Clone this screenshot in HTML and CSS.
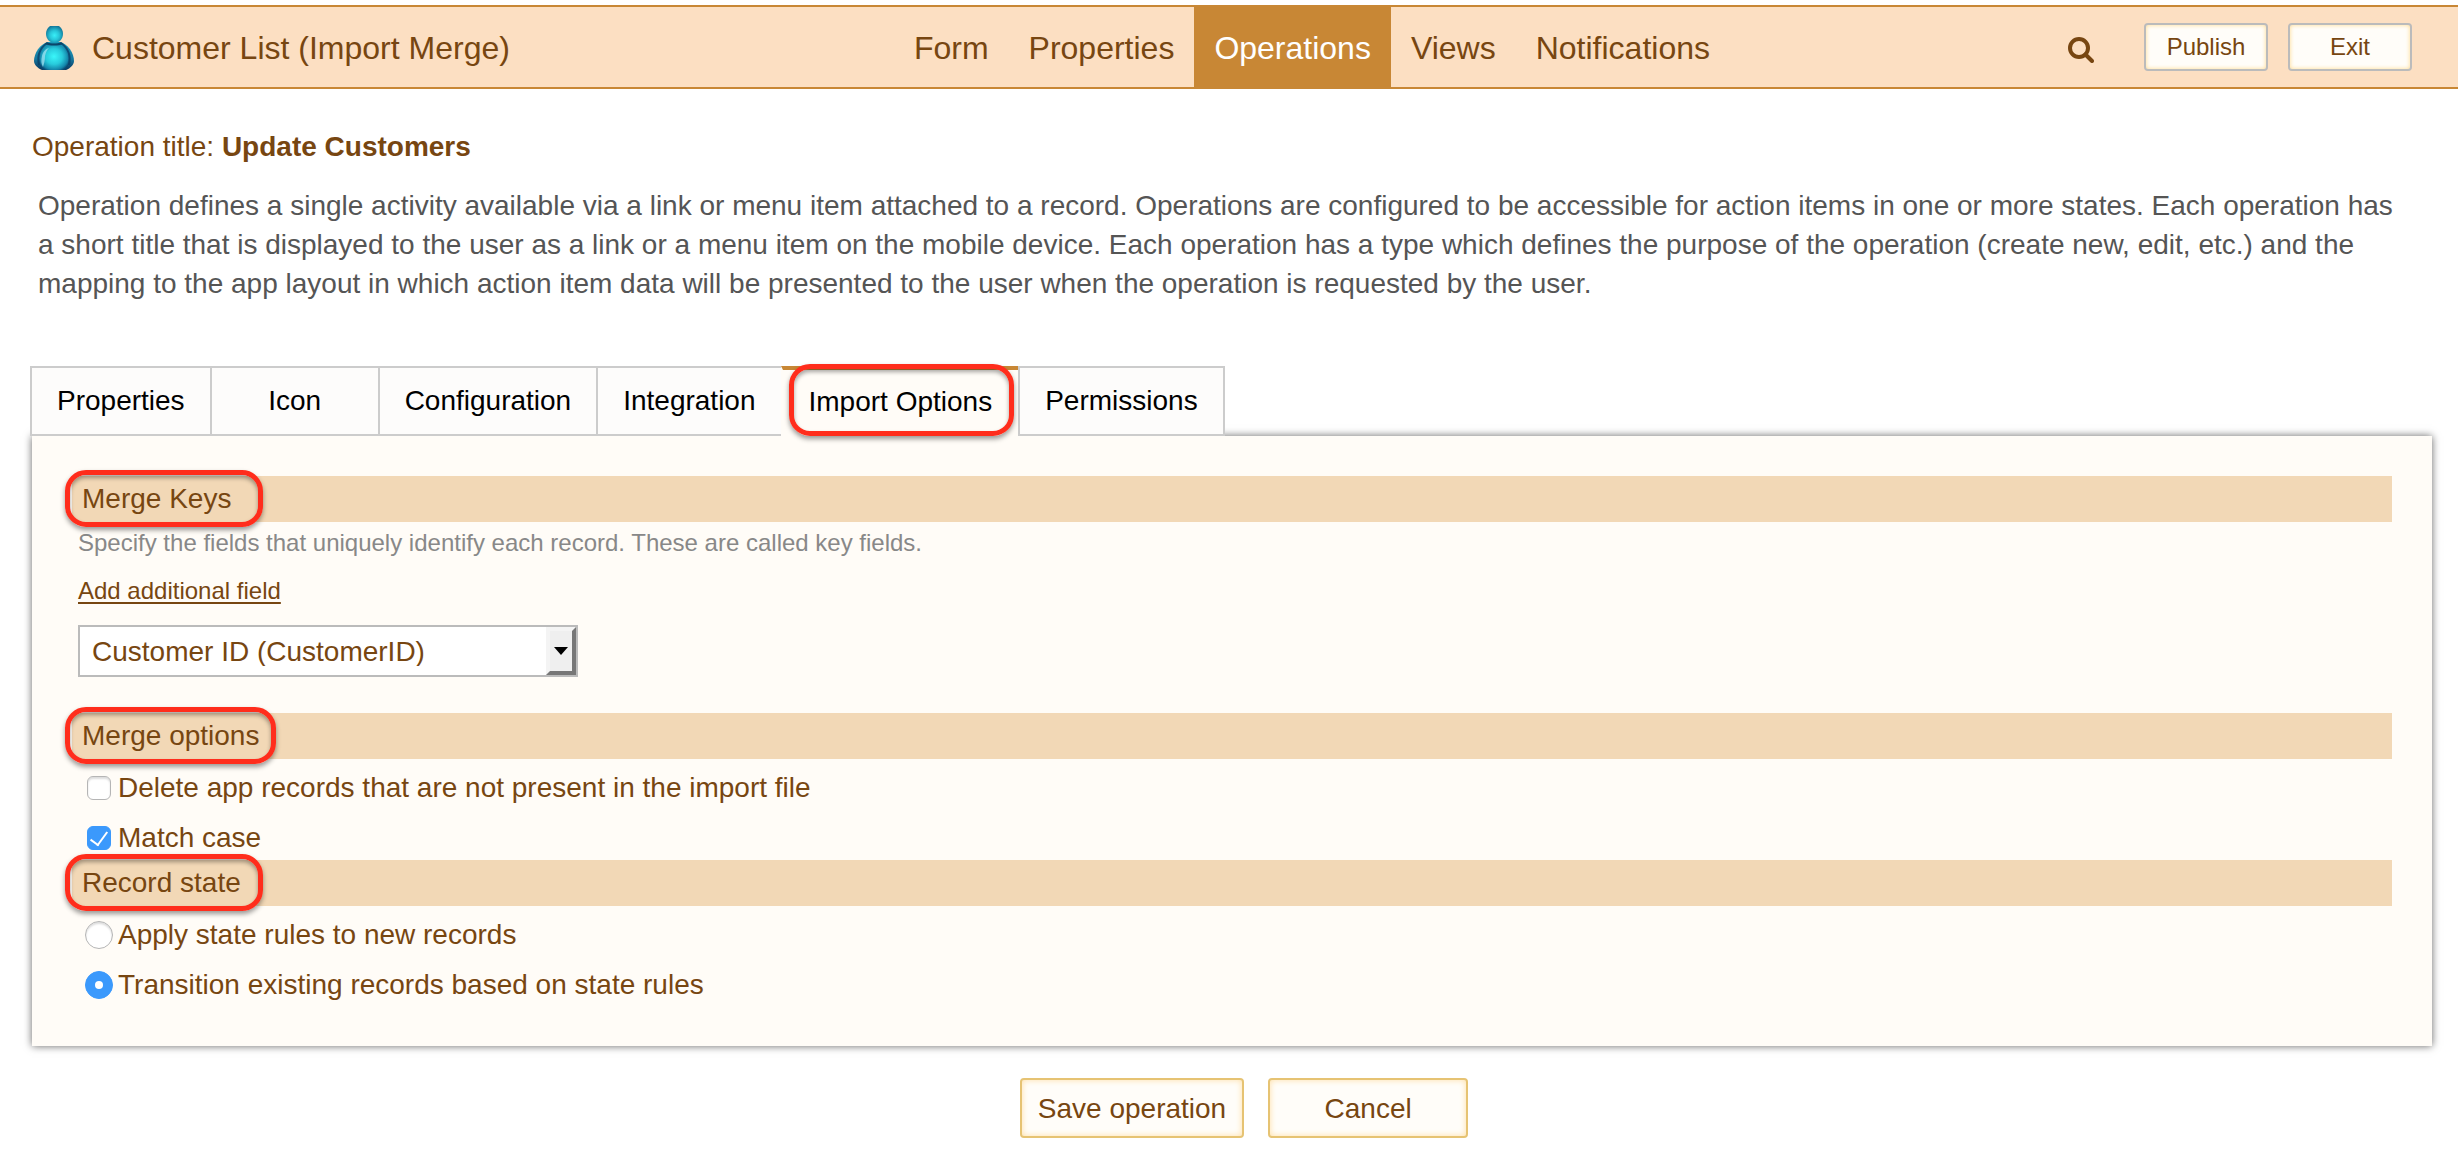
FILE: index.html
```html
<!DOCTYPE html>
<html lang="en">
<head>
    <meta charset="UTF-8">
    <meta name="viewport" content="width=device-width, initial-scale=1.0">
    <title>Customer List (Import Merge)</title>
    <link rel="stylesheet" href="styles.css">
</head>
<body>
    <header class="top-bar">
        <div class="brand">
            <svg class="brand-icon" width="40" height="44" viewBox="0 0 40 44" aria-hidden="true">
                <defs>
                    <radialGradient id="head-fill" cx="0.5" cy="0.55" r="0.55">
                        <stop offset="0" stop-color="#38eef8"/>
                        <stop offset="0.5" stop-color="#27c5d8"/>
                        <stop offset="1" stop-color="#137a9c"/>
                    </radialGradient>
                    <radialGradient id="body-fill" cx="0.5" cy="0.5" r="0.58">
                        <stop offset="0" stop-color="#3af6fa"/>
                        <stop offset="0.5" stop-color="#28cbdc"/>
                        <stop offset="0.85" stop-color="#1486ab"/>
                        <stop offset="1" stop-color="#0a4770"/>
                    </radialGradient>
                    <linearGradient id="arm-fill" x1="0" y1="0" x2="0" y2="1">
                        <stop offset="0" stop-color="#1a9cbc"/>
                        <stop offset="0.6" stop-color="#1678a0"/>
                        <stop offset="1" stop-color="#08365f"/>
                    </linearGradient>
                </defs>
                <path d="M14 16C6 18 0 27 0 35c0 3 3 7 8 9h24c5-2 8-6 8-9 0-8-6-17-14-19z" fill="url(#arm-fill)"/>
                <path d="M20 17c-8 0-13 8-14 15-1 6 0 9 3 12h22c3-3 4-6 3-12-1-7-6-15-14-15z" fill="url(#body-fill)"/>
                <path d="M13 17C6 22 3 30 5 39M27 17c7 5 10 13 8 22" fill="none" stroke="#0a3f66" stroke-width="2" opacity="0.8"/>
                <path d="M8 30c-1 4-1 8 1 11 1-3 2-7 2-11 1-4 2-6 4-8-4 1-6 4-7 8z" fill="#a9e6f4" opacity="0.7"/>
                <path d="M13 16c4 2 10 2 14 0l2 2c-5 2-13 2-18 0z" fill="#0b4468"/>
                <path d="M16 0h9c3 2 4 5 4 8 0 5-4 9-8.500 9S12 13 12 8c0-3 1-6 4-8z" fill="url(#head-fill)"/>
            </svg>
            <span>Customer List (Import Merge)</span>
        </div>
        <nav class="main-nav">
            <a href="#form">Form</a>
            <a href="#properties">Properties</a>
            <a href="#operations" class="current">Operations</a>
            <a href="#views">Views</a>
            <a href="#notifications">Notifications</a>
        </nav>
        <div class="top-actions">
            <button type="button" class="search-button" aria-label="Search">
                <svg width="26" height="26" viewBox="0 0 26 26" aria-hidden="true">
                    <circle cx="11" cy="11" r="9" fill="none" stroke="#774611" stroke-width="4"/>
                    <path d="M17.500 17.500L24 24" stroke="#774611" stroke-width="4" stroke-linecap="round"/>
                </svg>
            </button>
            <button type="button" class="small-button">Publish</button>
            <button type="button" class="small-button">Exit</button>
        </div>
    </header>

    <main>
        <h1 class="operation-title">Operation title: <strong>Update Customers</strong></h1>
        <p class="description">Operation defines a single activity available via a link or menu item attached to a record. Operations are configured to be accessible for action items in one or more states. Each operation has a short title that is displayed to the user as a link or a menu item on the mobile device. Each operation has a type which defines the purpose of the operation (create new, edit, etc.) and the mapping to the app layout in which action item data will be presented to the user when the operation is requested by the user.</p>

        <div class="tabs" role="tablist">
            <button type="button" class="tab" role="tab">Properties</button>
            <button type="button" class="tab" role="tab">Icon</button>
            <button type="button" class="tab" role="tab">Configuration</button>
            <button type="button" class="tab" role="tab">Integration</button>
            <button type="button" class="tab active" role="tab" aria-selected="true"><span class="callout">Import Options</span></button>
            <button type="button" class="tab" role="tab">Permissions</button>
        </div>

        <form>
            <div class="panel">
                <h2 class="section-bar"><span class="callout">Merge Keys</span></h2>
                <div class="merge-keys">
                    <label class="hint" for="key-field">Specify the fields that uniquely identify each record. These are called key fields.</label>
                    <a href="#add" class="add-link">Add additional field</a>
                    <div class="select-box">
                        <select id="key-field">
                            <option>Customer ID (CustomerID)</option>
                        </select>
                        <span class="select-arrow">
                            <svg width="14" height="8" viewBox="0 0 14 8" aria-hidden="true"><path d="M0 0h14L7 8z" fill="#000"/></svg>
                        </span>
                    </div>
                </div>

                <h2 class="section-bar"><span class="callout">Merge options</span></h2>
                <div class="options">
                    <div class="option">
                        <input type="checkbox" id="delete-records">
                        <label for="delete-records">Delete app records that are not present in the import file</label>
                    </div>
                    <div class="option">
                        <input type="checkbox" id="match-case" checked>
                        <label for="match-case">Match case</label>
                    </div>
                </div>

                <h2 class="section-bar"><span class="callout">Record state</span></h2>
                <div class="options">
                    <div class="option">
                        <input type="radio" name="record-state" id="apply-rules">
                        <label for="apply-rules">Apply state rules to new records</label>
                    </div>
                    <div class="option">
                        <input type="radio" name="record-state" id="transition-records" checked>
                        <label for="transition-records">Transition existing records based on state rules</label>
                    </div>
                </div>
            </div>

            <div class="form-actions">
                <button type="button" class="save-button">Save operation</button>
                <button type="button">Cancel</button>
            </div>
        </form>
    </main>
</body>
</html>
```

FILE: styles.css
```css
* {
    box-sizing: border-box;
}
body {
    margin: 0;
    padding-top: 5px;
    font-family: "Liberation Sans", Arial, Helvetica, sans-serif;
    font-size: 28px;
    line-height: 32px;
    color: #774611;
    background-color: #fff;
}
button, select {
    font: inherit;
    color: inherit;
    cursor: pointer;
}
h1, h2, p {
    margin: 0;
    font-size: 28px;
    font-weight: normal;
}

/* Top bar */
.top-bar {
    display: flex;
    justify-content: space-between;
    height: 84px;
    padding: 0 46px 0 34px;
    background-color: #fcdfc2;
    border-top: 2px solid #c88735;
    border-bottom: 2px solid #c88735;
    font-size: 32px;
}
.brand {
    display: flex;
    align-items: center;
    gap: 18px;
    padding: 2px 46px 0 0;
}
.main-nav {
    display: flex;
}
.main-nav a {
    display: flex;
    align-items: center;
    padding: 2px 20px 0;
    color: inherit;
    text-decoration: none;
}
.main-nav a.current {
    background-color: #c88735;
    color: #fff;
}
.top-actions {
    display: flex;
    align-items: center;
    gap: 20px;
}
.search-button {
    display: flex;
    margin-right: 30px;
    padding: 6px 0 0;
    border: none;
    background: none;
}
.small-button {
    width: 124px;
    height: 48px;
    padding: 0;
    font-size: 24px;
    background-color: #fffdf9;
    border: 2px solid #bbb;
    border-radius: 4px;
    box-shadow: inset 0 0 4px #ffd98a;
}

/* Page content */
main {
    padding: 42px 26px 24px 30px;
}
.operation-title {
    padding-left: 2px;
}
.description {
    padding: 23px 20px 0 8px;
    line-height: 39px;
    color: #555;
}

/* Tabs */
.tabs {
    position: relative;
    z-index: 1;
    display: flex;
    margin-top: 63px;
}
.tab {
    min-width: 170px;
    height: 70px;
    padding: 0 25px;
    background-color: #fdfcfb;
    border: 2px solid #ccc;
    color: #000;
}
.tab + .tab {
    margin-left: -2px;
}
.tab.active {
    background-color: #fffcf7;
    border-color: #c88735 transparent transparent;
    border-width: 4px 2px 0;
    padding: 0 26px 2px;
}
.tab.active + .tab {
    border-left-color: #ccc;
}

/* Red outline that marks a heading */
.callout {
    position: relative;
    display: inline-block;
}
.callout::after {
    content: "";
    position: absolute;
    inset: -6px -17px -5px -17px;
    border: 5px solid #ff2d1c;
    border-radius: 21px;
    box-shadow: 0 3px 5px rgba(0,0,0,0.4), inset 0 3px 4px rgba(0,0,0,0.35);
    pointer-events: none;
}
.tab .callout::after {
    inset: -22px -22px -18px -20px;
}
.section-bar .callout {
    min-width: 164px;
}

/* Panel */
.panel {
    margin-left: 2px;
    padding: 40px 40px 44px;
    background-color: #fffcf7;
    box-shadow: 0 0 8px rgba(0,0,0,0.6);
}
.section-bar {
    padding-left: 10px;
    line-height: 46px;
    background-color: #f2d8b6;
}
.merge-keys {
    display: flex;
    flex-direction: column;
    align-items: flex-start;
    gap: 20px;
    padding: 7px 6px 36px;
    font-size: 24px;
    line-height: 28px;
}
.hint {
    color: #888;
}
.add-link {
    color: inherit;
    text-underline-offset: 3px;
}
.select-box {
    position: relative;
    width: 500px;
    font-size: 28px;
}
.select-box select {
    display: block;
    appearance: none;
    width: 100%;
    height: 52px;
    padding: 2px 40px 0 12px;
    background-color: #fff;
    border: 2px solid #bbb;
    border-radius: 0;
}
.select-arrow {
    position: absolute;
    top: 2px;
    right: 2px;
    bottom: 2px;
    display: flex;
    align-items: center;
    justify-content: center;
    width: 30px;
    background-color: #efefef;
    border: 4px solid;
    border-color: #f4f4f4 #777 #777 #f4f4f4;
    pointer-events: none;
}

/* Check boxes and radio buttons */
.options {
    display: flex;
    flex-direction: column;
    gap: 16px;
    padding: 12px 13px 5px;
}
.options:last-child {
    padding-bottom: 0;
}
.option {
    display: flex;
    align-items: center;
    gap: 5px;
    height: 34px;
}
.option input {
    appearance: none;
    display: flex;
    align-items: center;
    justify-content: center;
    width: 28px;
    height: 28px;
    margin: 0;
    background-color: #fff;
    border: 1px solid #b5b5b5;
    border-radius: 50%;
    box-shadow: inset 0 2px 2px #ddd;
}
.option input[type="checkbox"] {
    width: 24px;
    height: 24px;
    margin: 0 2px;
    border-radius: 6px;
}
.option input:checked {
    background-color: #3b99fc;
    border-color: #3b99fc;
    box-shadow: none;
}
.option input[type="radio"]:checked::after {
    content: "";
    width: 8px;
    height: 8px;
    border-radius: 50%;
    background-color: #fff;
}
.option input[type="checkbox"]:checked::after {
    content: "";
    width: 8px;
    height: 15px;
    margin-bottom: 4px;
    border: solid #fff;
    border-width: 0 2px 2px 0;
    transform: rotate(36deg);
}

/* Buttons under the panel */
.form-actions {
    display: flex;
    justify-content: center;
    gap: 24px;
    padding: 32px 0 0 26px;
}
.form-actions button {
    min-width: 200px;
    height: 60px;
    padding: 2px 16px 0;
    background-color: #fffdf9;
    border: 2px solid #e6c373;
    border-radius: 4px;
    box-shadow: inset 0 0 6px #ffdfa6;
}
.form-actions .save-button {
    min-width: 224px;
}
```
